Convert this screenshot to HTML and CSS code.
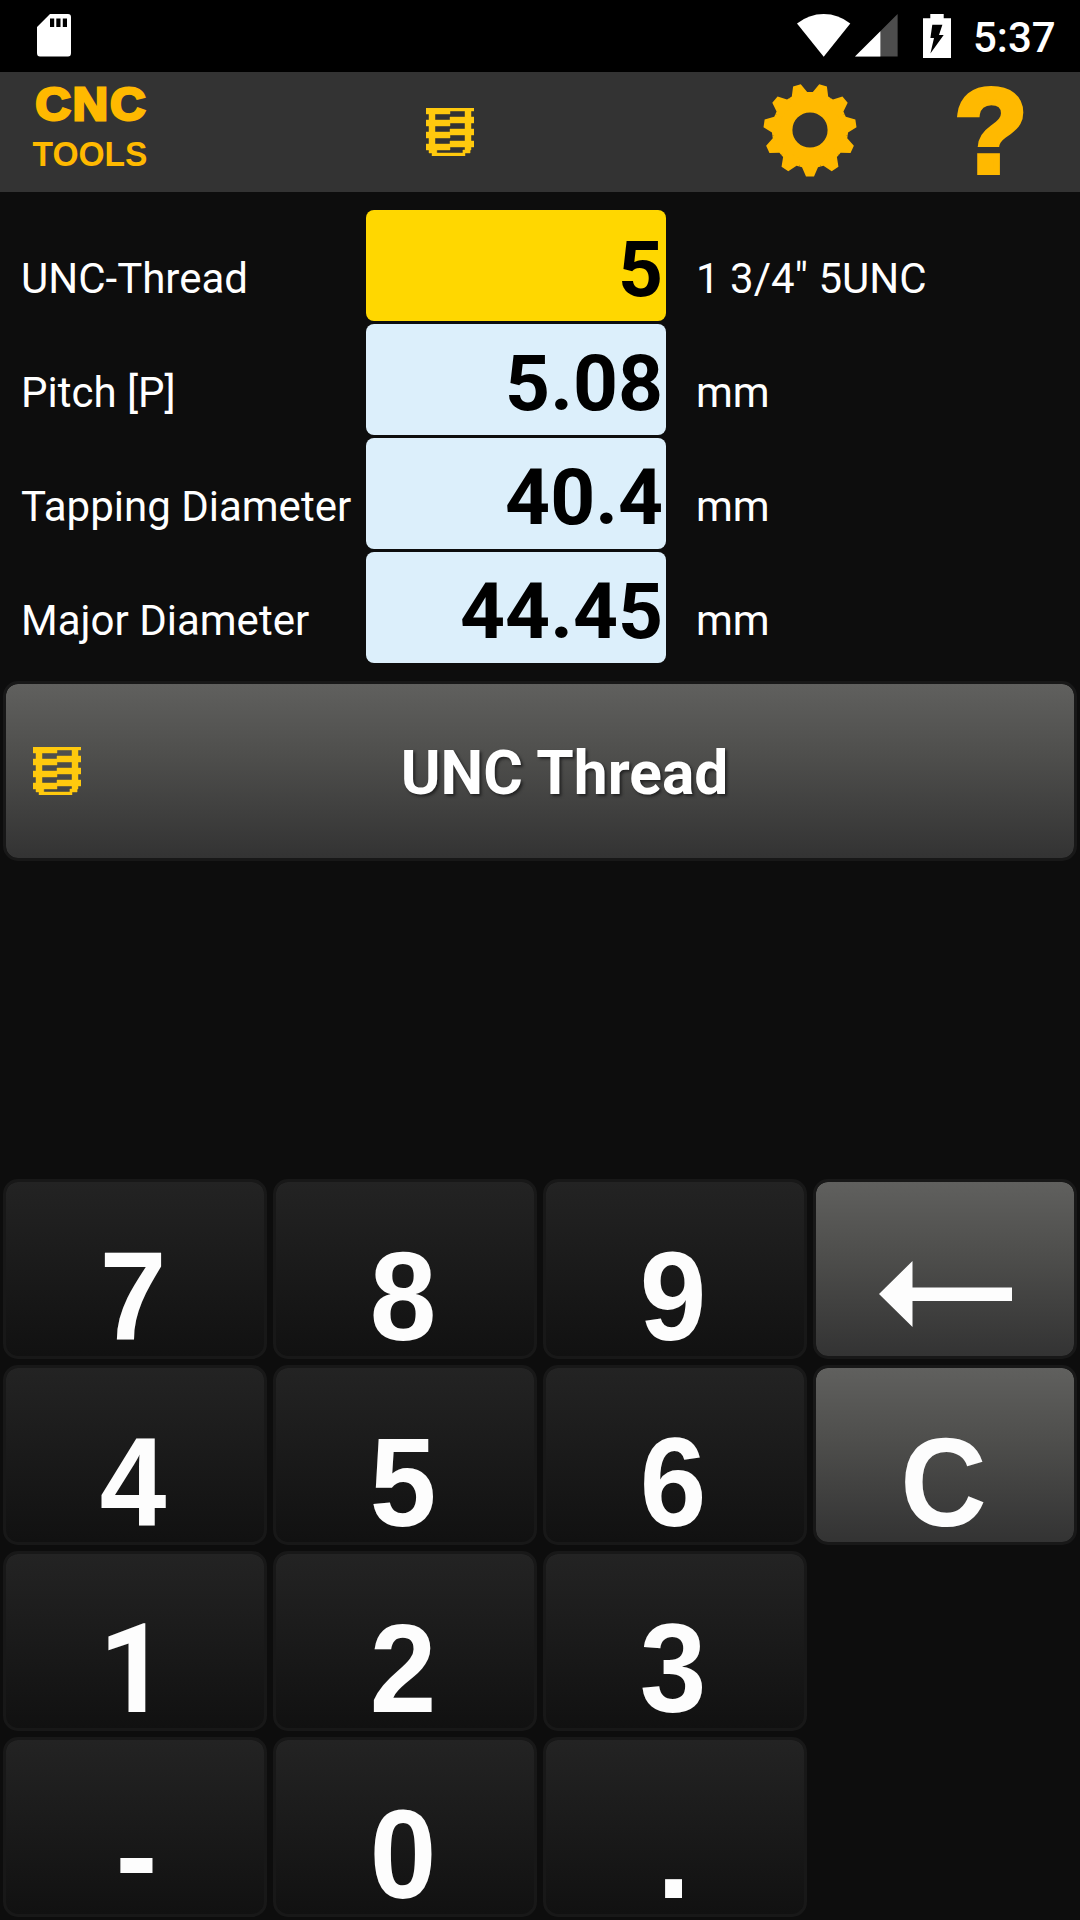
FILE: index.html
```html
<!DOCTYPE html>
<html lang="en">
<head>
<meta charset="utf-8">
<title>CNC Tools</title>
<link rel="stylesheet" href="styles.css">
</head>
<body>
<svg class="defs" width="0" height="0" aria-hidden="true">
  <symbol id="thread" viewBox="0 0 16 16">
    <path d="M0 0H16V1H0zM0 1H8V2H0zM13 1H15V14H13zM1 2H3V13H1zM8 3H16V5H8zM0 4H8V6H0zM8 7H16V9H8zM0 8H8V10H0zM8 11H16V13H8zM0 12H8V14H0zM1 14H3.6V15H1zM12.3 14H14.7V15H12.300zM2 15H13V16H2z"/>
  </symbol>
</svg>
<div class="screen">
  <div class="status">
    <svg class="sd" width="34" height="43" viewBox="0 0 34 43">
      <path fill="#fff" fill-rule="evenodd" d="M13 0H31Q34 0 34 3V39Q34 42.500 31 42.500H3Q0 42.500 0 39V13zM13 4.500V13H17.200V4.500zM19.300 4.500V13H23.500V4.500zM25.800 4.500V13H30V4.500z"/>
    </svg>
    <svg class="wifi" width="54" height="43" viewBox="0 0 54 43">
      <path fill="#fff" d="M26.700 42.700L0 9.500Q12 0 26.700 0T53.300 9.500z"/>
    </svg>
    <svg class="signal" width="43" height="43" viewBox="0 0 43 43">
      <path fill="#4d4d4d" d="M42.600 0V42.600H0z"/>
      <path fill="#fff" d="M25.400 17.200V42.600H0z"/>
    </svg>
    <svg class="battery" width="28" height="44" viewBox="0 0 28 44">
      <path fill="#fff" d="M7.300 0H20.700V4.300H28V44H0V4.300H7.300z"/>
      <path fill="#000" d="M9.300 10.700H19.400L16 21H20.700L7.400 39.500L11 24H7.400z"/>
    </svg>
    <span class="clock">5:37</span>
  </div>

  <header class="bar">
    <svg class="logo" width="150" height="120" viewBox="0 0 150 120">
      <text class="logo-cnc" x="35.500" y="47.700" textLength="112" lengthAdjust="spacingAndGlyphs">CNC</text>
      <text class="logo-tools" x="32.500" y="93.500" textLength="115" lengthAdjust="spacingAndGlyphs">TOOLS</text>
    </svg>
    <svg class="thread bar-thread"><use href="#thread"/></svg>
    <svg class="gear" width="96" height="96" viewBox="-48 -48 96 96">
      <circle r="27" fill="none" stroke="#ffb900" stroke-width="18.800"/>
      <g fill="#ffb900">
        <path id="tooth" d="M-9 30L-10.700 36.500L-8 37.300L-4 46.400H4L8 37.300L10.700 36.500L9 30z"/>
        <use href="#tooth" transform="rotate(32.727)"/>
        <use href="#tooth" transform="rotate(65.455)"/>
        <use href="#tooth" transform="rotate(98.182)"/>
        <use href="#tooth" transform="rotate(130.909)"/>
        <use href="#tooth" transform="rotate(163.636)"/>
        <use href="#tooth" transform="rotate(196.364)"/>
        <use href="#tooth" transform="rotate(229.091)"/>
        <use href="#tooth" transform="rotate(261.818)"/>
        <use href="#tooth" transform="rotate(294.545)"/>
        <use href="#tooth" transform="rotate(327.273)"/>
      </g>
    </svg>
    <span class="help">?</span>
  </header>

  <main class="form">
    <label>UNC-Thread</label><output class="active">5</output><span class="unit">1 3/4" 5UNC</span>
    <label>Pitch [P]</label><output>5.08</output><span class="unit">mm</span>
    <label>Tapping Diameter</label><output>40.4</output><span class="unit">mm</span>
    <label>Major Diameter</label><output>44.45</output><span class="unit">mm</span>
  </main>

  <button class="mode">
    <svg class="thread"><use href="#thread"/></svg>
    <span class="mode-title">UNC Thread</span>
  </button>

  <div class="keypad">
    <button class="key"><span>7</span></button>
    <button class="key"><span>8</span></button>
    <button class="key"><span>9</span></button>
    <button class="key light">
      <svg class="back" width="134" height="66" viewBox="0 0 134 66"><path fill="#fdfdfd" d="M0 33L33.500 0V26.500H133V40H33.500V66z"/></svg>
    </button>
    <button class="key"><span>4</span></button>
    <button class="key"><span>5</span></button>
    <button class="key"><span>6</span></button>
    <button class="key light"><span>C</span></button>
    <button class="key"><span class="one">1</span></button>
    <button class="key"><span>2</span></button>
    <button class="key"><span>3</span></button>
    <button class="key"><span class="minus">-</span></button>
    <button class="key"><span>0</span></button>
    <button class="key"><span>.</span></button>
  </div>
</div>
</body>
</html>
```
FILE: styles.css
```css
* { box-sizing: border-box; }
body {
  margin: 0;
  background: #0d0d0d;
  color: #fff;
  font-family: Roboto, "Liberation Sans", sans-serif;
}
svg { display: block; flex: none; }
.defs { position: absolute; }
.screen {
  width: 1080px;
  height: 1920px;
  display: flex;
  flex-direction: column;
}

.status {
  flex: none;
  height: 72px;
  display: flex;
  align-items: flex-start;
  padding: 14px 24px 0 37px;
  background: #000;
}
.wifi { margin-left: 726px; }
.signal { margin-left: 4px; }
.battery { margin-left: 25px; }
.clock {
  margin-left: 22px;
  font-size: 42px;
  font-weight: 500;
  line-height: 48px;
}

.bar {
  flex: none;
  height: 120px;
  display: flex;
  align-items: flex-start;
  background: #333;
}
.logo { overflow: visible; }
.logo text { fill: #ffb900; font-family: "Liberation Sans", Arial, sans-serif; font-weight: bold; }
.logo-cnc { font-size: 46px; letter-spacing: 2px; stroke: #ffb900; stroke-width: 3px; }
.logo-tools { font-size: 35px; }
.thread { width: 48px; height: 48px; fill: #ffc90e; stroke: #ffc90e; stroke-width: 0.15px; }
.bar-thread { margin: 36px 0 0 276px; }
.gear { margin: 10px 0 0 288px; }
.help {
  position: relative;
  margin-left: 97px;
  width: 70px;
  color: #ffb900;
  -webkit-text-stroke: 6px #ffb900;
  font: bold 118px/118px "Liberation Sans", Arial, sans-serif;
}
/* keeps the dot clear of the hook */
.help::after {
  content: "";
  position: absolute;
  left: 10px;
  top: 75px;
  width: 50px;
  height: 6px;
  background: #333;
}

.form {
  flex: none;
  display: grid;
  grid-template-columns: 366px 300px 1fr;
  grid-auto-rows: 111px;
  row-gap: 3px;
  padding-top: 18px;
  font-size: 42px;
  line-height: 49px;
}
.form label { padding: 44px 0 0 21px; white-space: nowrap; }
.unit { padding: 44px 0 0 30px; }
.form output {
  border-radius: 8px;
  padding: 13px 3px 0;
  background: #dceffb;
  color: #000;
  font-size: 78.5px;
  font-weight: bold;
  line-height: 92px;
  text-align: right;
}
.form .active { background: #ffd700; }

button {
  padding: 0;
  color: #fdfdfd;
  border: 3px solid #181818;
  border-radius: 15px;
  background: linear-gradient(#232323, #111) padding-box, #181818;
}
.mode, .light {
  background: linear-gradient(#60605e, #4e4e4c 42%, #333) padding-box, #181818;
}
.mode {
  flex: none;
  display: flex;
  align-items: center;
  height: 180px;
  margin: 18px 3px 0;
  padding-left: 27px;
}
.mode-title {
  flex: 1;
  padding: 5px 26px 0 0;
  font: bold 60.5px/70px Roboto, sans-serif;
  color: #fff;
  text-shadow: 2px 2px 3px #222;
}

.keypad {
  margin-top: auto;
  padding: 0 3px 3px;
  display: grid;
  grid-template-columns: repeat(4, 264px);
  grid-auto-rows: 180px;
  gap: 6px;
}
.key {
  display: flex;
  justify-content: center;
  align-items: flex-start;
  padding: 56px 3px 0 0;
  font: bold 126px/118px "Liberation Sans", Arial, sans-serif;
}
.key span { transform: scaleX(0.95); }
.key .one { padding: 1px 1px 0 0; font-family: Roboto, sans-serif; font-size: 125px; }
.key .minus { padding-left: 6px; transform: none; }
.key:nth-child(12) { grid-column: 1; }
.back { margin: 23px 0 0 4px; }
```
